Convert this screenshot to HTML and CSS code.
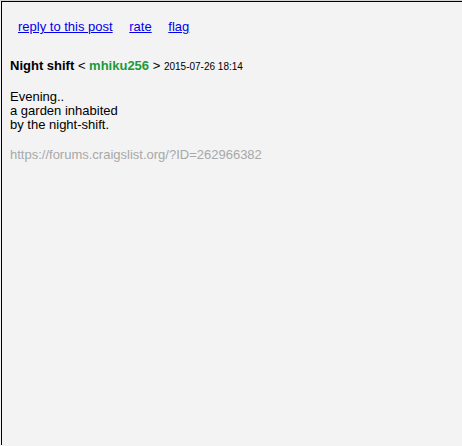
FILE: index.html
```html
<!DOCTYPE html>
<html>
<head>
<meta charset="utf-8">
<link rel="stylesheet" href="styles.css">
</head>
<body>
<div class="frame">
  <div class="actions">
    <a href="#">reply to this post</a>
    <a href="#">rate</a>
    <a href="#">flag</a>
  </div>
  <div class="post">
    <div class="head"><b class="title">Night shift</b> &lt; <b class="user">mhiku256</b> &gt; <span class="date">2015-07-26 18:14</span></div>
    <div class="body">Evening..<br>a garden inhabited<br>by the night-shift.</div>
    <div class="url">https://forums.craigslist.org/?ID=262966382</div>
  </div>
</div>
</body>
</html>
```
FILE: styles.css
```css
html { background: #f3f3f3; }
body {
  margin: 0;
  font-family: "Liberation Sans", Arial, sans-serif;
  font-size: 13px;
  color: #000;
  border-top: 1px solid #d4d4d4;
}
.frame {
  margin-left: 1px;
  border-top: 1px solid #000;
  border-left: 1px solid #000;
  min-height: 444px;
  box-sizing: border-box;
}
.actions {
  padding: 17px 0 0 16px;
  line-height: 16px;
}
.actions a {
  color: #0000ee;
  margin-right: 13px;
}
.post {
  padding: 23px 0 0 8px;
}
.head { line-height: 16px; }
.user { color: #1a9a3a; }
.date { font-size: 10px; }
.body {
  margin-top: 15px;
  line-height: 14px;
}
.url {
  margin-top: 15px;
  color: #a8a8a8;
  line-height: 16px;
}
```
